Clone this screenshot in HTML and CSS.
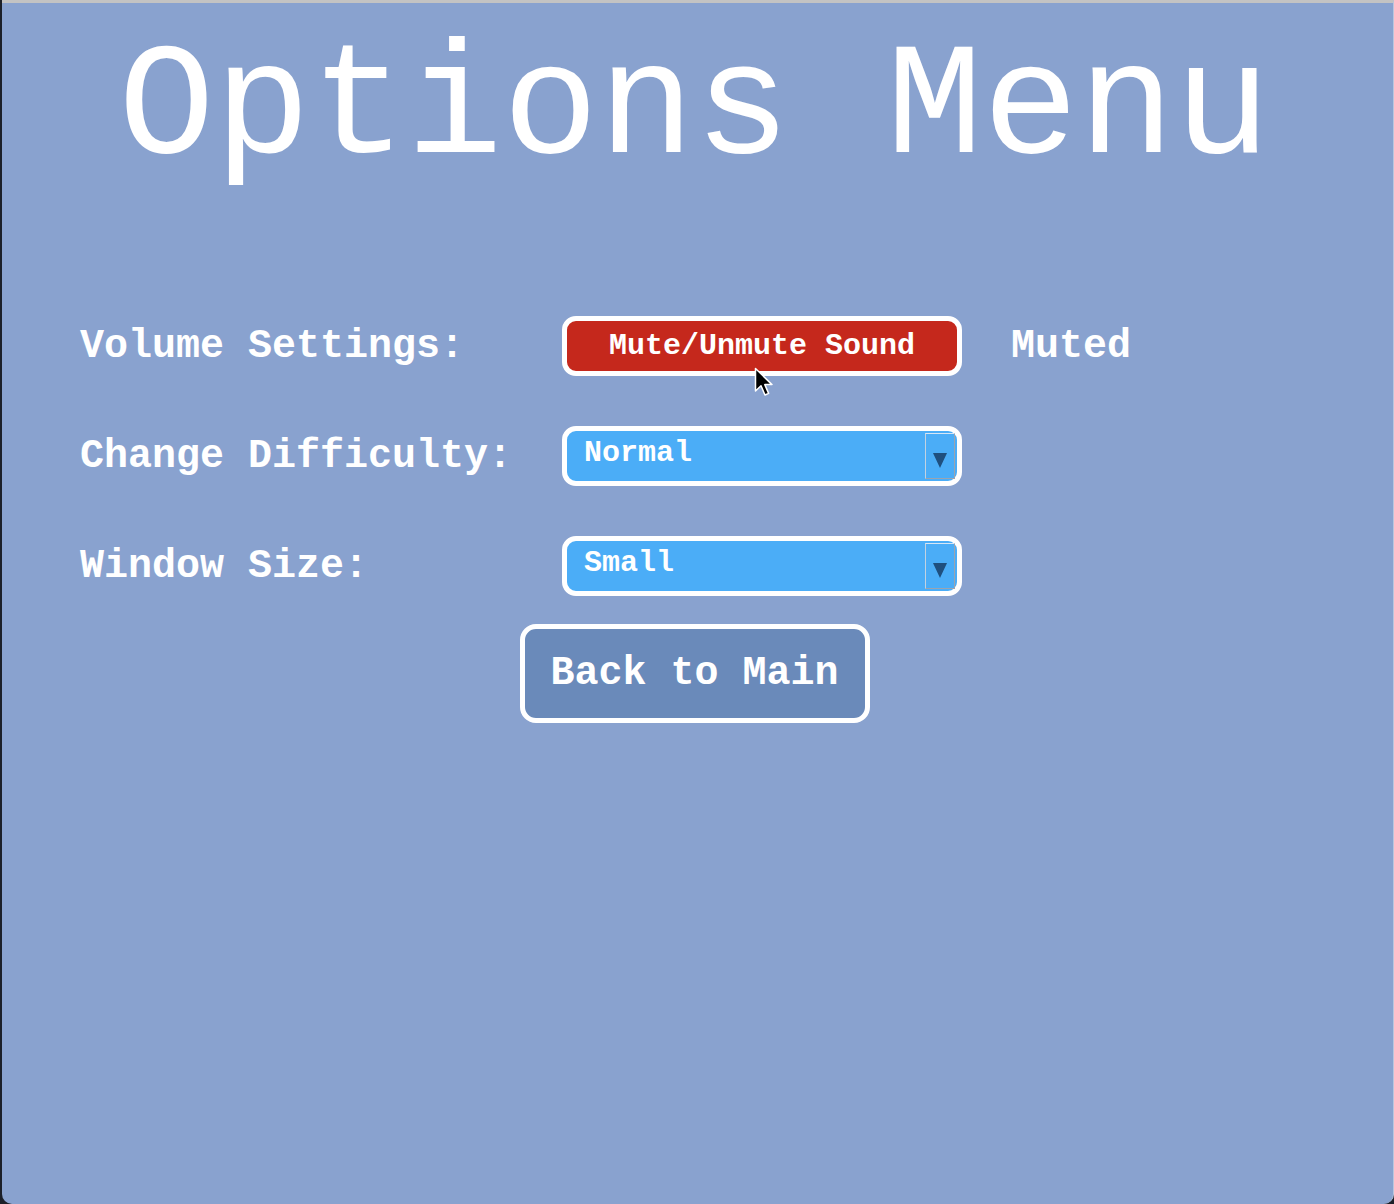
FILE: index.html
```html
<!DOCTYPE html>
<html lang="en">
<head>
<meta charset="utf-8">
<title>Options Menu</title>
<link rel="stylesheet" href="styles.css">
</head>
<body>
<div class="frame">
  <h1 class="title">Options Menu</h1>
  <div class="options">
    <div class="label">Volume Settings:</div>
    <div class="control">
      <button class="mute-btn" type="button">Mute/Unmute Sound</button>
      <svg class="cursor" width="24" height="34" viewBox="0 0 24 34" aria-hidden="true">
        <path d="M1.5 1.5 L1.5 24 L7 18.8 L11 28 L14.6 26.4 L10.8 17.6 L18 17.6 Z" fill="#000" stroke="#fff" stroke-width="1.5" stroke-linejoin="round"/>
      </svg>
    </div>
    <div class="status">Muted</div>

    <div class="label">Change Difficulty:</div>
    <div class="control select-wrap">
      <select class="select">
        <option>Normal</option>
        <option>Easy</option>
        <option>Hard</option>
      </select>
      <span class="arrow"></span>
    </div>
    <div></div>

    <div class="label">Window Size:</div>
    <div class="control select-wrap">
      <select class="select">
        <option>Small</option>
        <option>Medium</option>
        <option>Large</option>
      </select>
      <span class="arrow"></span>
    </div>
    <div></div>
  </div>
  <div class="back-wrap">
    <button class="back-btn" type="button">Back to Main</button>
  </div>
</div>
</body>
</html>
```

FILE: styles.css
```css
html, body {
  margin: 0;
  padding: 0;
  height: 100%;
}

body {
  background: #1c2029;
  font-family: "Liberation Mono", "Courier New", monospace;
  color: #ffffff;
}

.frame {
  box-sizing: border-box;
  height: 100vh;
  margin-left: 2px;
  border-top: 3px solid #c3c3c3;
  border-right: 1px solid #b9c6de;
  border-radius: 0 0 10px 10px;
  background: #89a2cf;
  padding-top: 27px;
  overflow: hidden;
}

.title {
  margin: 0 6px 0 0;
  font-size: 160px;
  line-height: 160px;
  font-weight: normal;
  text-align: center;
  white-space: nowrap;
  letter-spacing: 0;
}

.options {
  margin-top: 126px;
  padding-left: 78px;
  display: grid;
  grid-template-columns: 482px 400px auto;
  grid-auto-rows: 60px;
  row-gap: 50px;
  align-items: center;
}

.label,
.status {
  font-size: 40px;
  font-weight: bold;
  white-space: nowrap;
}

.status {
  padding-left: 49px;
}

.control {
  position: relative;
  height: 60px;
}

.mute-btn {
  box-sizing: border-box;
  width: 400px;
  height: 60px;
  border: 5px solid #ffffff;
  border-radius: 14px;
  background: #c5281c;
  color: #ffffff;
  font-family: "Liberation Mono", "Courier New", monospace;
  font-size: 30px;
  font-weight: bold;
  padding: 0;
  margin: 0;
}

.cursor {
  position: absolute;
  left: 192px;
  top: 51px;
}

.select {
  box-sizing: border-box;
  width: 400px;
  height: 60px;
  border: 5px solid #ffffff;
  border-radius: 14px;
  background: #4badf7;
  color: #ffffff;
  font-family: "Liberation Mono", "Courier New", monospace;
  font-size: 30px;
  font-weight: bold;
  padding: 0 0 6px 17px;
  margin: 0;
  -webkit-appearance: none;
  appearance: none;
  outline: none;
}

.arrow {
  position: absolute;
  right: 7px;
  top: 7px;
  box-sizing: border-box;
  width: 30px;
  height: 46px;
  border: 1px solid #9aa4b0;
  border-top-color: #d6e6f6;
  border-left-color: #c2d2e2;
  background: #4badf7;
  pointer-events: none;
}

.arrow::after {
  content: "";
  position: absolute;
  left: 7px;
  top: 19px;
  width: 0;
  height: 0;
  border-left: 7px solid transparent;
  border-right: 7px solid transparent;
  border-top: 15px solid #1f4f7e;
}

.back-wrap {
  display: flex;
  justify-content: center;
  margin-top: 28px;
  margin-right: 6px;
}

.back-btn {
  box-sizing: border-box;
  width: 350px;
  height: 99px;
  border: 5px solid #ffffff;
  border-radius: 16px;
  background: #6a8aba;
  color: #ffffff;
  font-family: "Liberation Mono", "Courier New", monospace;
  font-size: 40px;
  font-weight: bold;
  padding: 0;
  margin: 0;
}
```
